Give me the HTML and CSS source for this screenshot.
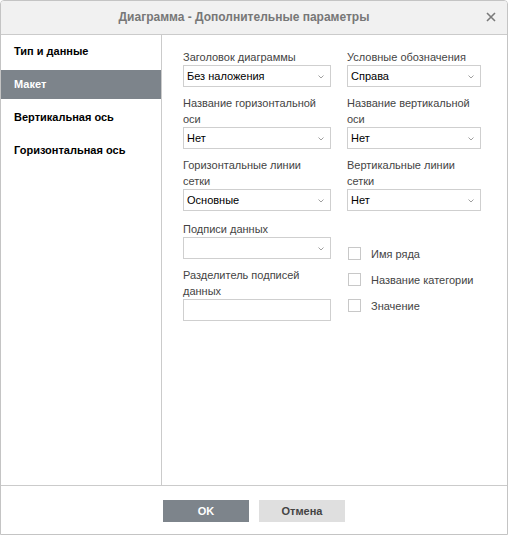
FILE: index.html
```html
<!DOCTYPE html>
<html lang="ru">
<head>
<meta charset="utf-8">
<title>Диаграмма - Дополнительные параметры</title>
<link rel="stylesheet" href="styles.css">
</head>
<body>
<div class="dialog">
  <div class="header">
    <span class="title">Диаграмма - Дополнительные параметры</span>
    <svg class="close" width="10" height="10" viewBox="0 0 10 10"><path d="M1 1L9 9M9 1L1 9" stroke="#7a7a7a" stroke-width="1.6" fill="none"/></svg>
  </div>
  <div class="body">
    <div class="sidebar">
      <div class="nav-item">Тип и данные</div>
      <div class="nav-item active">Макет</div>
      <div class="nav-item">Вертикальная ось</div>
      <div class="nav-item">Горизонтальная ось</div>
    </div>
    <div class="content">
      <div class="grid">
        <div class="group">
          <div class="label">Заголовок диаграммы</div>
          <div class="select">Без наложения<svg class="chev" width="6" height="4" viewBox="0 0 6 4"><path d="M0.5 0.5L3 3L5.5 0.5" stroke="#a0a0a0" fill="none"/></svg></div>
        </div>
        <div class="group">
          <div class="label">Условные обозначения</div>
          <div class="select">Справа<svg class="chev" width="6" height="4" viewBox="0 0 6 4"><path d="M0.5 0.5L3 3L5.5 0.5" stroke="#a0a0a0" fill="none"/></svg></div>
        </div>
        <div class="group">
          <div class="label">Название горизонтальной оси</div>
          <div class="select">Нет<svg class="chev" width="6" height="4" viewBox="0 0 6 4"><path d="M0.5 0.5L3 3L5.5 0.5" stroke="#a0a0a0" fill="none"/></svg></div>
        </div>
        <div class="group">
          <div class="label">Название вертикальной оси</div>
          <div class="select">Нет<svg class="chev" width="6" height="4" viewBox="0 0 6 4"><path d="M0.5 0.5L3 3L5.5 0.5" stroke="#a0a0a0" fill="none"/></svg></div>
        </div>
        <div class="group">
          <div class="label">Горизонтальные линии сетки</div>
          <div class="select">Основные<svg class="chev" width="6" height="4" viewBox="0 0 6 4"><path d="M0.5 0.5L3 3L5.5 0.5" stroke="#a0a0a0" fill="none"/></svg></div>
        </div>
        <div class="group">
          <div class="label">Вертикальные линии сетки</div>
          <div class="select">Нет<svg class="chev" width="6" height="4" viewBox="0 0 6 4"><path d="M0.5 0.5L3 3L5.5 0.5" stroke="#a0a0a0" fill="none"/></svg></div>
        </div>
        <div class="stack">
          <div class="group">
            <div class="label">Подписи данных</div>
            <div class="select"><svg class="chev" width="6" height="4" viewBox="0 0 6 4"><path d="M0.5 0.5L3 3L5.5 0.5" stroke="#a0a0a0" fill="none"/></svg></div>
          </div>
          <div class="group">
            <div class="label">Разделитель подписей данных</div>
            <div class="input"></div>
          </div>
        </div>
        <div class="checks">
          <div class="check"><span class="box"></span>Имя ряда</div>
          <div class="check"><span class="box"></span>Название категории</div>
          <div class="check"><span class="box"></span>Значение</div>
        </div>
      </div>
    </div>
  </div>
  <div class="footer">
    <div class="btn primary">OK</div>
    <div class="btn secondary">Отмена</div>
  </div>
</div>
</body>
</html>
```
FILE: styles.css
```css
html, body {
  margin: 0;
  padding: 0;
  background: #fff;
}
body {
  font-family: "Liberation Sans", Arial, sans-serif;
}
.dialog {
  width: 508px;
  height: 535px;
  box-sizing: border-box;
  border: 1px solid #c4c4c4;
  border-radius: 4px 4px 0 0;
  display: flex;
  flex-direction: column;
  background: #fff;
  overflow: hidden;
}
.header {
  height: 33px;
  flex: none;
  background: #f1f1f1;
  border-bottom: 1px solid #cbcbcb;
  position: relative;
  display: flex;
  align-items: center;
  justify-content: center;
  padding-right: 20px;
}
.title {
  font-size: 12px;
  font-weight: bold;
  color: #777;
  line-height: 33px;
}
.close {
  position: absolute;
  right: 11px;
  top: 11px;
}
.body {
  height: 450px;
  flex: none;
  display: flex;
}
.sidebar {
  width: 160px;
  flex: none;
  border-right: 1px solid #cbcbcb;
  display: flex;
  flex-direction: column;
  gap: 4px;
  padding-top: 2px;
}
.nav-item {
  height: 29px;
  line-height: 29px;
  padding-left: 13px;
  font-size: 11px;
  font-weight: bold;
  color: #000;
}
.nav-item.active {
  background: #7d848b;
  color: #fff;
}
.content {
  padding: 14px 0 0 21px;
}
.grid {
  display: grid;
  grid-template-columns: 148px 134px;
  column-gap: 16px;
  align-items: start;
}
.group {
  margin-bottom: 8px;
}
.label {
  font-size: 11px;
  line-height: 16px;
  color: #444;
}
.select, .input {
  position: relative;
  height: 22px;
  box-sizing: border-box;
  border: 1px solid #cfcfcf;
  padding-left: 3px;
  font-size: 11px;
  line-height: 20px;
  color: #000;
}
.chev {
  position: absolute;
  right: 6px;
  top: 9px;
}
.stack {
  margin-top: 2px;
}
.checks {
  margin-top: 2px;
  padding-top: 26px;
}
.check {
  display: flex;
  align-items: center;
  height: 13px;
  margin-bottom: 13px;
  font-size: 11px;
  color: #444;
}
.box {
  width: 13px;
  height: 13px;
  box-sizing: border-box;
  border: 1px solid #c8c8c8;
  margin: 0 10px 0 1px;
  flex: none;
}
.footer {
  flex: 1;
  border-top: 1px solid #cbcbcb;
  display: flex;
  justify-content: center;
  gap: 10px;
  padding-top: 14px;
}
.btn {
  width: 86px;
  height: 22px;
  line-height: 22px;
  text-align: center;
  font-size: 11px;
  font-weight: bold;
}
.btn.primary {
  background: #7d848b;
  color: #fff;
}
.btn.secondary {
  background: #dfdfdf;
  color: #444;
}
```
